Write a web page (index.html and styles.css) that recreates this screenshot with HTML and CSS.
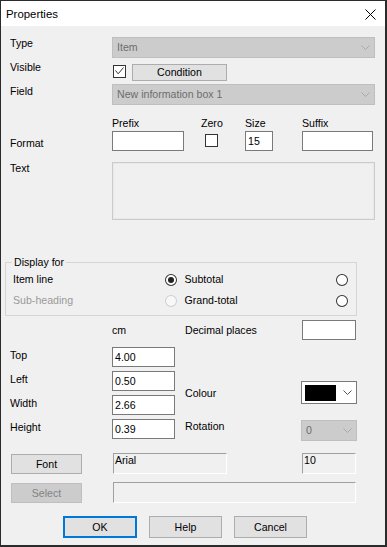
FILE: index.html
```html
<!DOCTYPE html>
<html>
<head>
<meta charset="utf-8">
<link rel="stylesheet" href="styles.css">
</head>
<body>
<div class="window">
  <div class="titlebar">
    <span class="title">Properties</span>
    <svg class="close" width="11" height="11" viewBox="0 0 11 11"><path d="M0.5 0.5L10.5 10.5M10.5 0.5L0.5 10.5" stroke="#000" stroke-width="1" fill="none"/></svg>
  </div>
  <div class="content">
    <div class="row r-type">
      <div class="lbl">Type</div>
      <div class="combo disabled wide"><span>Item</span><svg class="chev" width="9" height="5" viewBox="0 0 9 5"><polyline points="0.5,0.5 4.5,4.5 8.5,0.5" fill="none" stroke="#a9a9a9" stroke-width="1"/></svg></div>
    </div>
    <div class="row r-visible">
      <div class="lbl">Visible</div>
      <span class="check vis-check"><svg width="11" height="11" viewBox="0 0 11 11"><polyline points="1.5,4.5 4.2,7.8 9.5,1.5" fill="none" stroke="#333" stroke-width="1"/></svg></span>
      <button class="btn cond">Condition</button>
    </div>
    <div class="row r-field">
      <div class="lbl lbl-field">Field</div>
      <div class="combo disabled wide"><span>New information box 1</span><svg class="chev" width="9" height="5" viewBox="0 0 9 5"><polyline points="0.5,0.5 4.5,4.5 8.5,0.5" fill="none" stroke="#a9a9a9" stroke-width="1"/></svg></div>
    </div>
    <div class="row r-format">
      <div class="lbl lbl-format">Format</div>
      <div class="fmt-grid">
        <span class="h">Prefix</span>
        <span class="h h-zero">Zero</span>
        <span class="h">Size</span>
        <span class="h">Suffix</span>
        <span class="input w-prefix"></span>
        <span class="check zero-check"></span>
        <span class="input w-size">15</span>
        <span class="input w-suffix"></span>
      </div>
    </div>
    <div class="row r-text">
      <div class="lbl">Text</div>
      <div class="textarea"></div>
    </div>
    <fieldset class="group">
      <legend>Display for</legend>
      <div class="rrow">
        <span class="rlbl">Item line</span>
        <span class="radio on"></span>
        <span class="rtext">Subtotal</span>
        <span class="radio"></span>
      </div>
      <div class="rrow">
        <span class="rlbl muted">Sub-heading</span>
        <span class="radio off"></span>
        <span class="rtext">Grand-total</span>
        <span class="radio"></span>
      </div>
    </fieldset>
    <div class="row r-dec">
      <div class="lbl"></div>
      <div class="cm">cm</div>
      <div class="dlbl">Decimal places</div>
      <div class="input w-dec"></div>
    </div>
    <div class="pos">
      <div class="plbl r1">Top</div>
      <div class="input w-pos r1">4.00</div>
      <div class="plbl r2">Left</div>
      <div class="input w-pos r2">0.50</div>
      <div class="plbl r3">Width</div>
      <div class="input w-pos r3">2.66</div>
      <div class="plbl r4">Height</div>
      <div class="input w-pos r4">0.39</div>
      <div class="clbl">Colour</div>
      <div class="combo colour"><span class="swatch"></span><svg class="chev" width="9" height="5" viewBox="0 0 9 5"><polyline points="0.5,0.5 4.5,4.5 8.5,0.5" fill="none" stroke="#555" stroke-width="1"/></svg></div>
      <div class="rotlbl">Rotation</div>
      <div class="combo disabled rot"><span>0</span><svg class="chev" width="9" height="5" viewBox="0 0 9 5"><polyline points="0.5,0.5 4.5,4.5 8.5,0.5" fill="none" stroke="#a9a9a9" stroke-width="1"/></svg></div>
    </div>
    <div class="frow r-font">
      <button class="btn side">Font</button>
      <div class="static w-font">Arial</div>
      <div class="static w-fsize">10</div>
    </div>
    <div class="frow r-select">
      <button class="btn side dis">Select</button>
      <div class="static w-sel"></div>
    </div>
    <div class="actions">
      <button class="btn act ok">OK</button>
      <button class="btn act">Help</button>
      <button class="btn act">Cancel</button>
    </div>
  </div>
</div>
</body>
</html>
```

FILE: styles.css
```css
* { box-sizing: border-box; }
html, body { margin: 0; padding: 0; }
body {
  font-family: "Liberation Sans", Arial, sans-serif;
  font-size: 10.6px;
  line-height: 13px;
  color: #000;
  background: #f0f0f0;
}
.window {
  width: 387px;
  height: 547px;
  border: 1px solid #2b2b2b;
  border-right-width: 2px;
  border-bottom-width: 2px;
  background: #f0f0f0;
  display: flex;
  flex-direction: column;
}
.titlebar {
  height: 25px;
  flex-shrink: 0;
  background: #fff;
  display: flex;
  align-items: flex-start;
  justify-content: space-between;
  padding-left: 5px;
}
.title { margin-top: 7px; font-size: 11.4px; }
.close { margin-top: 8px; margin-right: 9px; }
.content { padding-left: 9px; display: flex; flex-direction: column; }
.row { display: flex; align-items: flex-start; }
.lbl { width: 102px; flex-shrink: 0; }

.combo {
  display: flex;
  align-items: center;
  border: 1px solid #7a7a7a;
  background: #fff;
  padding-left: 4px;
}
.combo.disabled { border-color: #bfbfbf; background: #cccccc; color: #6d6d6d; }
.combo.wide { width: 263px; height: 21px; }
.chev { margin-left: auto; margin-right: 4px; flex-shrink: 0; }

.r-type { margin-top: 11px; }
.r-visible { margin-top: 3px; height: 20px; }
.r-field { margin-top: 3px; }
.lbl-field { margin-top: 1px; }

.check {
  width: 13px;
  height: 13px;
  border: 1px solid #333;
  background: #fff;
  display: flex;
}
.vis-check { margin-top: 4px; margin-left: 1px; }
.btn {
  font: inherit;
  color: #000;
  background: #e1e1e1;
  border: 1px solid #adadad;
  padding: 0;
  margin: 0;
}
.cond { margin-top: 3px; margin-left: 6px; width: 95px; height: 17px; }

.r-format { margin-top: 12px; }
.lbl-format { padding-top: 20px; }
.fmt-grid {
  display: grid;
  grid-template-columns: 72px 61px 57px 71px;
  grid-template-rows: 14px 20px;
}
.h-zero { margin-left: 17px; }
.input {
  height: 20px;
  border: 1px solid #7a7a7a;
  background: #fff;
  padding-left: 2px;
  line-height: 18px;
}
.w-prefix { width: 72px; }
.zero-check { margin-left: 21px; margin-top: 3px; }
.w-size { width: 28px; }
.w-suffix { width: 71px; }

.r-text { margin-top: 11px; }
.textarea {
  width: 263px;
  height: 58px;
  border: 1px solid #cbcbcb;
  box-shadow: inset 0 0 0 1px #e9e9e9;
  background: #f0f0f0;
}

.group {
  margin: 36px 0 0 -5px;
  width: 352px;
  border: 1px solid #d5d5d5;
  padding: 4px 0 8px 7px;
  min-width: 0;
}
.group legend { padding: 0 2px; margin-left: -1px; line-height: 13px; }
.rrow { display: flex; align-items: center; height: 13px; }
.rrow + .rrow { margin-top: 8px; }
.rlbl { width: 152px; }
.muted { color: #9a9a9a; }
.rtext { width: 152px; }
.radio {
  width: 12px;
  height: 12px;
  border-radius: 50%;
  border: 1px solid #333;
  background: #fff;
  margin-right: 8px;
  display: flex;
  align-items: center;
  justify-content: center;
}
.radio.on::after {
  content: "";
  width: 6px;
  height: 6px;
  border-radius: 50%;
  background: #222;
}
.radio.off { border-color: #cfcfcf; background: #f8f8f8; }

.r-dec { margin-top: 4px; height: 20px; }
.cm { width: 73px; margin-top: 4px; }
.dlbl { width: 117px; margin-top: 4px; }
.w-dec { width: 54px; }

.pos {
  display: grid;
  grid-template-columns: 102px 73px 116px 56px;
  grid-template-rows: repeat(4, 20px);
  row-gap: 4px;
  margin-top: 7px;
}
.r1 { grid-row: 1; }
.r2 { grid-row: 2; }
.r3 { grid-row: 3; }
.r4 { grid-row: 4; }
.plbl { grid-column: 1; padding-top: 2px; }
.w-pos { grid-column: 2; width: 63px; }
.clbl { grid-column: 3; grid-row: 2 / 4; align-self: center; }
.colour { grid-column: 4; grid-row: 2 / 4; align-self: start; margin-top: 10px; width: 56px; height: 23px; padding-left: 3px; }
.swatch { width: 31px; height: 16px; background: #000; }
.rotlbl { grid-column: 3; grid-row: 4; padding-top: 1px; }
.rot { grid-column: 4; grid-row: 4; margin-top: 1px; width: 56px; height: 21px; }

.frow { display: grid; grid-template-columns: 102px 190px 54px; }
.r-font { margin-top: 14px; }
.r-select { margin-top: 8px; }
.side { width: 71px; height: 20px; margin-top: 1px; margin-left: 1px; }
.side.dis { background: #cccccc; border-color: #bfbfbf; color: #838383; }
.static {
  height: 21px;
  border-top: 1px solid #a0a0a0;
  border-left: 1px solid #a0a0a0;
  border-bottom: 1px solid #fff;
  border-right: 1px solid #fff;
  padding-left: 1px;
}
.w-font { width: 114px; margin-left: 1px; }
.w-fsize { width: 54px; }
.w-sel { width: 243px; margin-left: 1px; grid-column: 2 / 4; }

.actions { display: flex; gap: 12px; margin-top: 13px; padding-left: 53px; }
.act { width: 73px; height: 22px; }
.ok { width: 74px; border: 2px solid #0078d7; }
```
